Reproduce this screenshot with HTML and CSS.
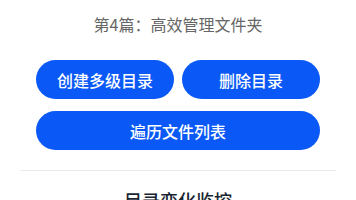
FILE: index.html
```html
<!DOCTYPE html>
<html lang="zh">
<head>
    <meta charset="UTF-8">
    <meta name="viewport" content="width=device-width, initial-scale=1.0">
    <title>高效管理文件夹</title>
    <link rel="stylesheet" href="styles.css">
</head>
<body>
    <div class="page">
        <p class="title">第4篇：高效管理文件夹</p>

        <div class="actions">
            <button class="btn">创建多级目录</button>
            <button class="btn">删除目录</button>
            <button class="btn wide">遍历文件列表</button>
        </div>

        <div class="divider"></div>

        <h2 class="section-title">目录变化监控</h2>
    </div>
</body>
</html>
```

FILE: styles.css
```css
* {
    margin: 0;
    padding: 0;
    box-sizing: border-box;
    font-family: "Noto Sans CJK SC", "Noto Sans", sans-serif;
}

html, body {
    width: 100%;
    height: 100%;
    overflow: hidden;
    background: #ffffff;
}

.page {
    display: flex;
    flex-direction: column;
}

.title {
    padding-top: 13px;
    font-size: 16px;
    line-height: 22px;
    text-align: center;
    color: #666666;
}

.actions {
    display: grid;
    grid-template-columns: 1fr 1fr;
    gap: 12px 8px;
    margin-top: 25px;
    padding: 0 36px;
}

.btn {
    height: 39px;
    border: none;
    border-radius: 20px;
    background: #0a59f7;
    color: #ffffff;
    font-size: 16px;
    font-weight: 500;
}

.btn.wide {
    grid-column: span 2;
}

.divider {
    height: 1px;
    margin: 20px 20px 0;
    background: #ebebeb;
}

.section-title {
    margin-top: 17px;
    font-size: 18px;
    line-height: 24px;
    font-weight: 500;
    text-align: center;
    color: #182431;
}
```
